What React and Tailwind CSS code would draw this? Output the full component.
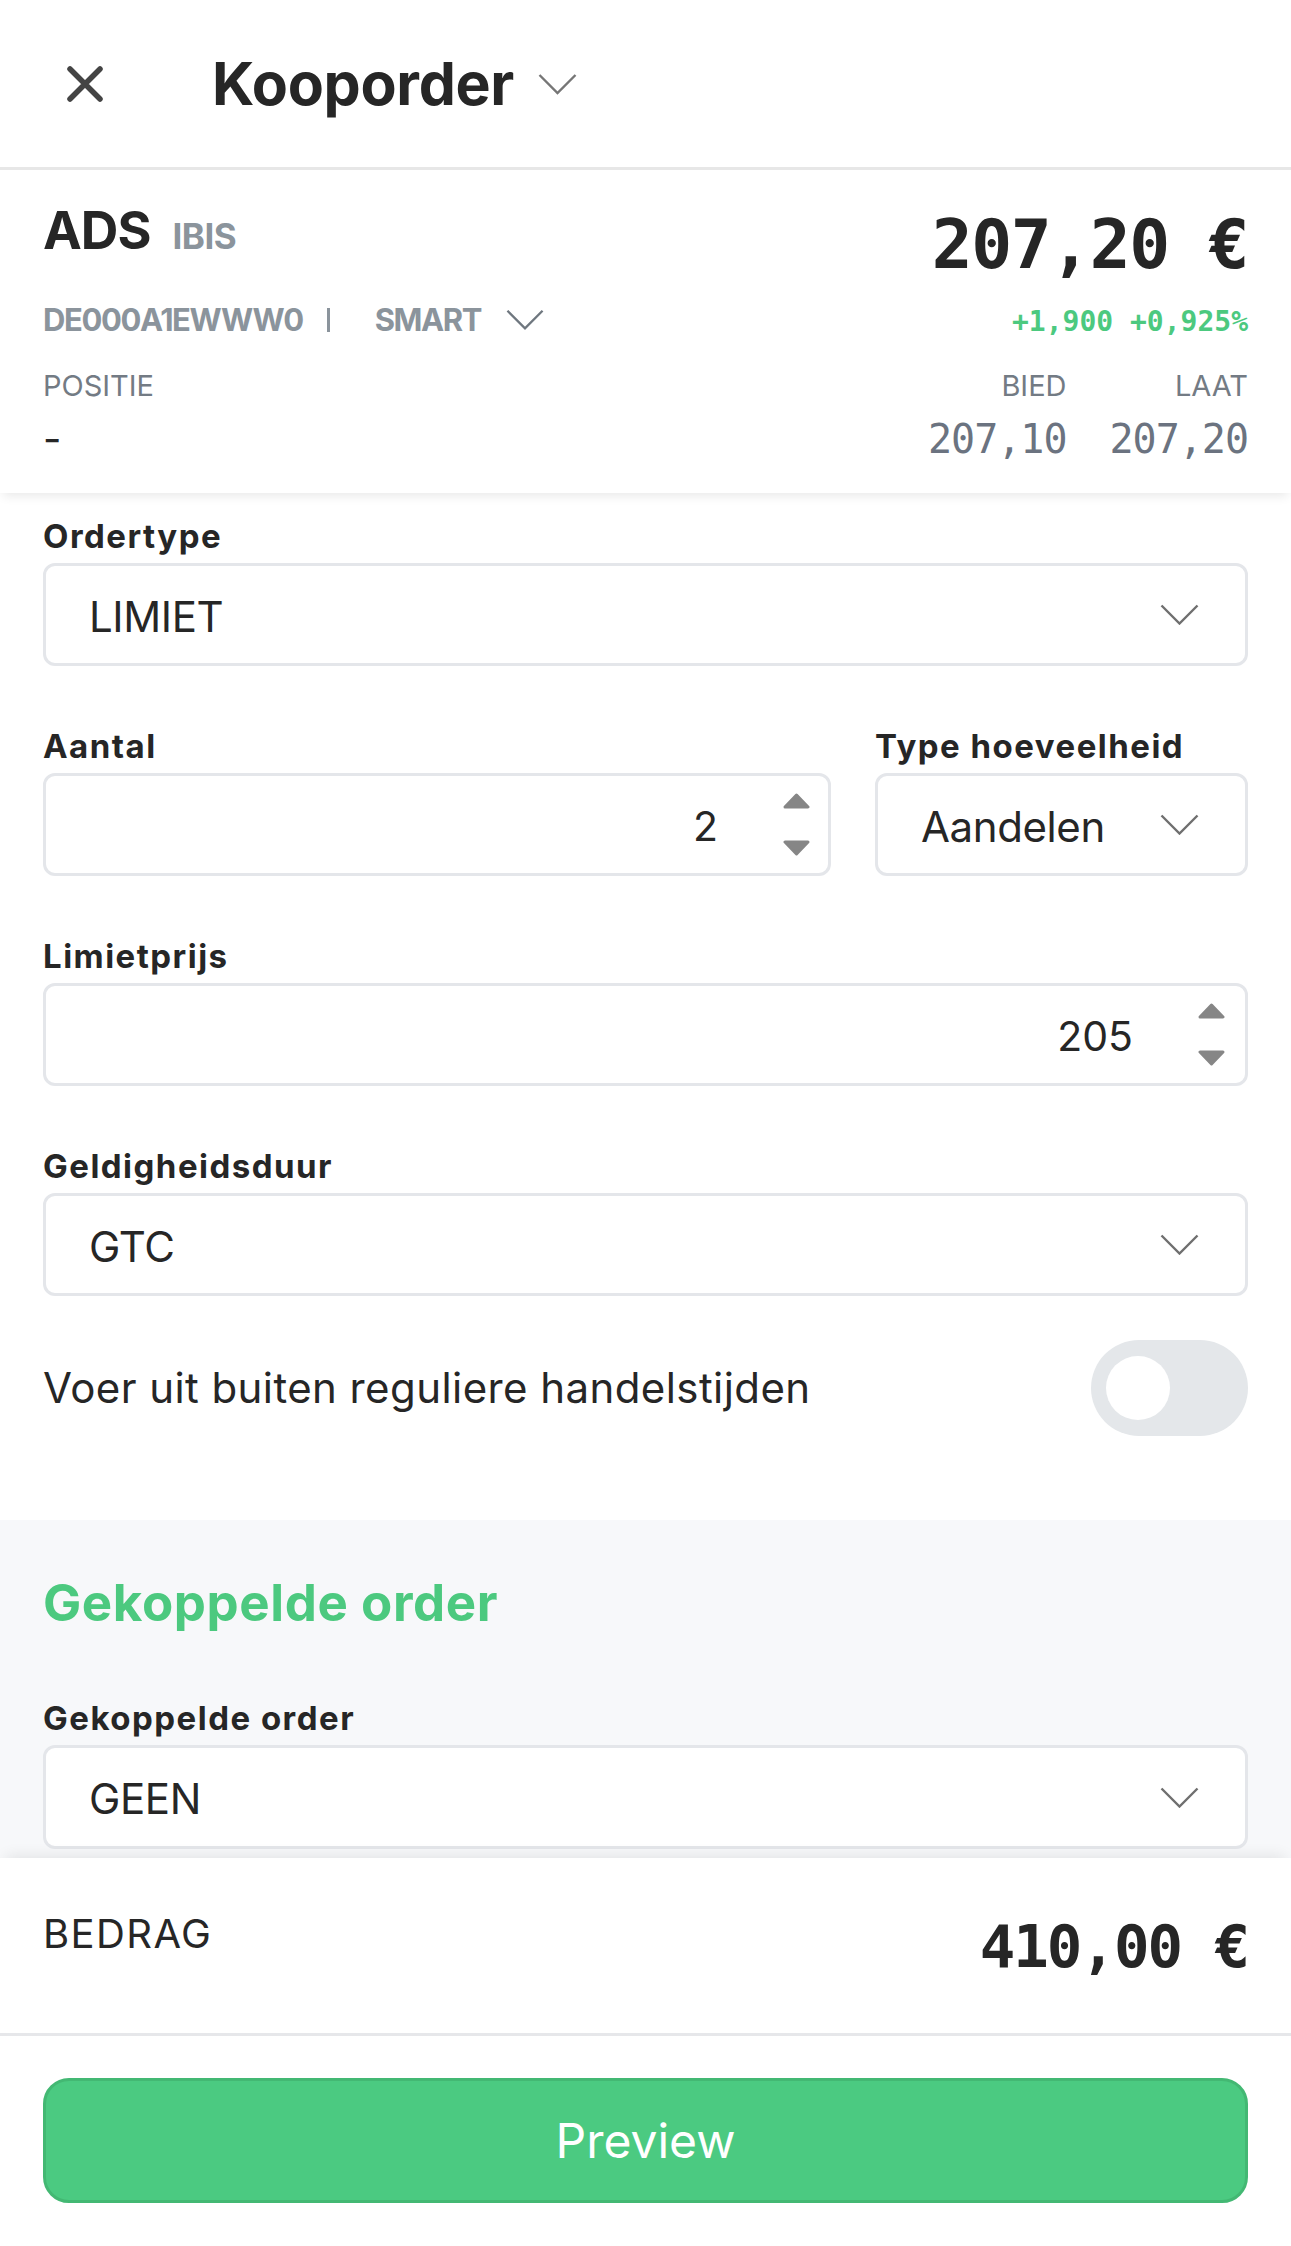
import React from "react";

const mono = "font-['DejaVu_Sans_Mono',monospace]";

const Chevron = ({ className }) => (
  <svg viewBox="0 0 39 21" className={className} fill="none" stroke="currentColor" strokeWidth="2.4">
    <path d="M1.5 1.5 L19.5 19.5 L37.5 1.5" />
  </svg>
);

const Arrow = ({ down }) => (
  <svg viewBox="0 0 27 16" className="w-[27px] h-[16px] text-[#868686]">
    <path
      d={down ? "M2 2 L25 2 L13.5 14 Z" : "M13.5 2 L25 14 L2 14 Z"}
      fill="currentColor"
      stroke="currentColor"
      strokeWidth="3"
      strokeLinejoin="round"
    />
  </svg>
);

const Label = ({ children }) => (
  <div className="text-[33px] font-bold leading-none tracking-[0.045em] mb-[10px]">{children}</div>
);

const Select = ({ value, h = "h-[103px]" }) => (
  <div className={`${h} rounded-[12px] border-[3px] border-[#e4e6ea] bg-white flex items-center pl-[43px] pr-[46px]`}>
    <span className="flex-1 text-[42px] leading-none tracking-[-0.4px] pt-[4px]">{value}</span>
    <Chevron className="w-[39px] h-[21px] text-[#6f6f6f]" />
  </div>
);

const NumberInput = ({ value, right }) => (
  <div className="h-[103px] rounded-[12px] border-[3px] border-[#e4e6ea] bg-white flex items-center justify-end">
    <span className="text-[41px] leading-none pt-[4px]">{value}</span>
    <div className={`ml-[65px] ${right} flex flex-col gap-[31px]`}>
      <Arrow />
      <Arrow down />
    </div>
  </div>
);

export default function App() {
  return (
    <div className="w-full min-h-[2246px] bg-white text-[#262626] font-['Inter','Noto_Sans',sans-serif]">
      {/* header */}
      <header className="h-[170px] border-b-[3px] border-[#e7e7e7] flex items-center">
        <svg viewBox="0 0 38 38" className="ml-[66px] w-[38px] h-[38px] text-[#444]">
          <path d="M4 4 L34 34 M34 4 L4 34" stroke="currentColor" strokeWidth="5.5" strokeLinecap="round" />
        </svg>
        <h1 className="ml-[108px] text-[59px] font-bold leading-none tracking-[-0.3px]">Kooporder</h1>
        <Chevron className="ml-[24px] w-[39px] h-[22px] text-[#767676]" />
      </header>

      {/* instrument card */}
      <section className="relative z-10 h-[323px] bg-white px-[43px] flex justify-between shadow-[0_6px_10px_-3px_rgba(0,0,0,0.09)]">
        <div>
          <div className="mt-[35px] flex items-baseline">
            <span className="text-[52px] font-bold leading-none tracking-[-1px]">ADS</span>
            <span className="ml-[22px] text-[35px] font-bold leading-none tracking-[-0.5px] text-[#8b949c]">IBIS</span>
          </div>
          <div className="mt-[47px] flex items-center text-[31px] font-bold leading-none tracking-[-1.4px] text-[#8b949c]">
            <span>DE000A1EWWW0</span>
            <span className="ml-[24px] w-[3px] h-[24px] bg-[#8b949c]" />
            <span className="ml-[45px]">SMART</span>
            <Chevron className="ml-[25px] w-[38px] h-[21px] text-[#6f777f]" />
          </div>
          <div className="mt-[36px] text-[29px] leading-none text-[#737b84]">POSITIE</div>
          <div className="mt-[19px] text-[40px] leading-none text-[#262626]">-</div>
        </div>

        <div className="flex flex-col items-end">
          <div className={`mt-[41px] ${mono} text-[68px] font-bold leading-none tracking-[-1.4px]`}>207,20 €</div>
          <div className={`mt-[29px] ${mono} text-[28px] font-bold leading-none text-[#4cc97f]`}>+1,900 +0,925%</div>
          <div className="mt-[35px] grid grid-cols-2 gap-x-[43px] text-right">
            <span className="text-[29px] leading-none text-[#737b84]">BIED</span>
            <span className="text-[29px] leading-none text-[#737b84]">LAAT</span>
            <span className={`mt-[19px] ${mono} text-[40px] leading-none text-[#6b7380] tracking-[-1px]`}>207,10</span>
            <span className={`mt-[19px] ${mono} text-[40px] leading-none text-[#6b7380] tracking-[-1px]`}>207,20</span>
          </div>
        </div>
      </section>

      {/* form */}
      <section className="px-[43px] pt-[27px] pb-[84px] flex flex-col gap-[64px]">
        <div>
          <Label>Ordertype</Label>
          <Select value="LIMIET" />
        </div>

        <div className="grid grid-cols-[1fr_373px] gap-x-[44px]">
          <div>
            <Label>Aantal</Label>
            <NumberInput value="2" right="mr-[18px]" />
          </div>
          <div>
            <Label>Type hoeveelheid</Label>
            <Select value="Aandelen" />
          </div>
        </div>

        <div>
          <Label>Limietprijs</Label>
          <NumberInput value="205" right="mr-[20px]" />
        </div>

        <div>
          <Label>Geldigheidsduur</Label>
          <Select value="GTC" />
        </div>

        <div className="-mt-[20px] flex items-center justify-between">
          <span className="text-[42px] leading-none tracking-[0.01em]">Voer uit buiten reguliere handelstijden</span>
          <div className="w-[157px] h-[96px] rounded-full bg-[#e4e7ea] flex items-center pl-[15px]">
            <div className="w-[64px] h-[64px] rounded-full bg-white" />
          </div>
        </div>
      </section>

      {/* linked order */}
      <section className="bg-[#f7f8fa] px-[43px] pt-[57px] pb-[9px]">
        <h2 className="text-[51px] font-bold leading-none tracking-[0.6px] text-[#4cc97f]">Gekoppelde order</h2>
        <div className="mt-[74px]">
          <Label>Gekoppelde order</Label>
          <Select value="GEEN" h="h-[104px]" />
        </div>
      </section>

      {/* footer */}
      <footer className="relative z-10 bg-white shadow-[0_-8px_14px_-6px_rgba(0,0,0,0.09)]">
        <div className="h-[178px] border-b-[3px] border-[#e6e7ea] px-[43px] pt-[56px] flex justify-between items-start">
          <span className="text-[40px] leading-none tracking-[1.4px]">BEDRAG</span>
          <span className={`mt-[3px] ${mono} text-[59px] font-bold leading-none tracking-[-2px]`}>410,00 €</span>
        </div>
        <div className="px-[43px] pt-[42px] pb-[43px]">
          <button className="w-full h-[125px] rounded-[26px] bg-[#4bca81] border-[3px] border-[#43b873] text-white text-[48px] leading-none">
            Preview
          </button>
        </div>
      </footer>
    </div>
  );
}
